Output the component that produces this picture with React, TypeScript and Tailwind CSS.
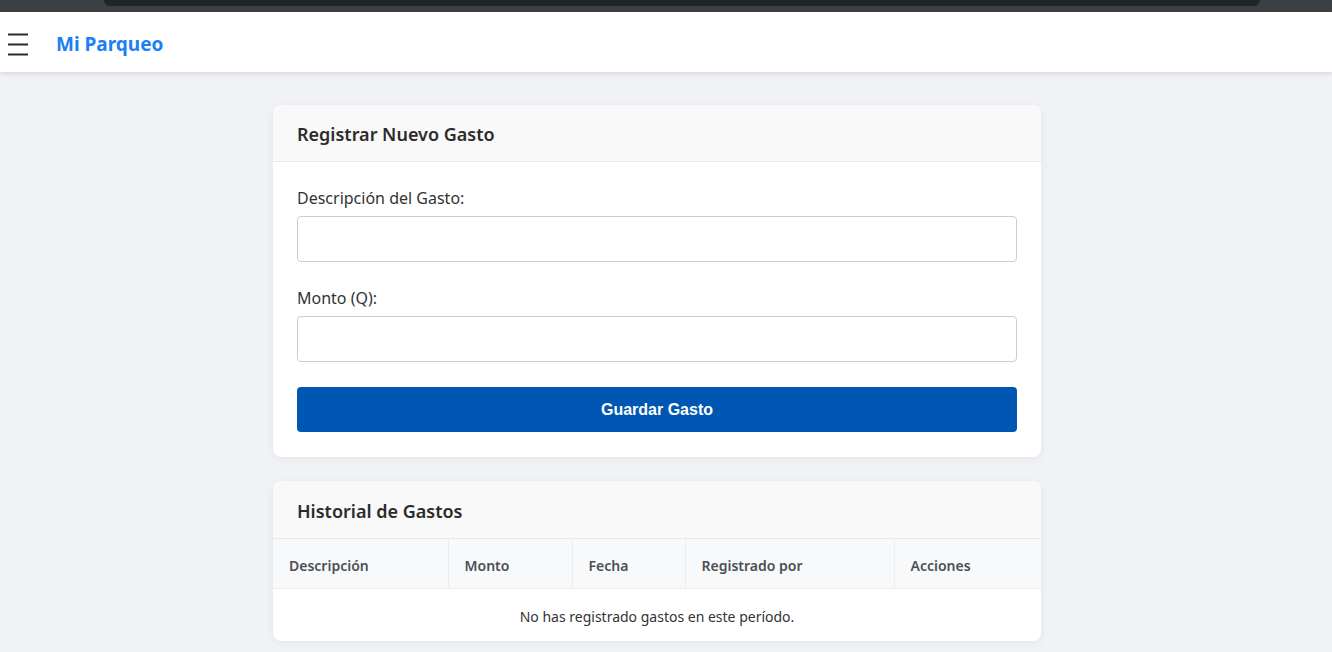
const columns = [
  { label: "Descripción", w: "w-[175px]" },
  { label: "Monto", w: "w-[124px]" },
  { label: "Fecha", w: "w-[113px]" },
  { label: "Registrado por", w: "w-[209px]" },
  { label: "Acciones", w: "" },
]

function Field({ label }: { label: string }) {
  return (
    <div className="flex flex-col">
      <label className="text-[16px] leading-6 text-[#333] mb-[6px]">{label}</label>
      <input className="h-[46px] w-full rounded-[4px] border border-[#ccc] bg-white px-3 outline-none" />
    </div>
  )
}

export default function App() {
  return (
    <div className="min-h-[652px] bg-[#f0f2f5] font-['Noto_Sans',sans-serif] text-[#333]">
      <div className="h-[12px] bg-[#3a4043] px-[104px]">
        <div className="h-[6px] rounded-b-[10px] bg-[#1f2628] w-[1156px]" />
      </div>
      <nav className="flex h-[60px] items-center bg-white shadow-[0_2px_4px_rgba(0,0,0,0.1)]">
        <svg className="ml-[7px] mt-[3px]" width="22" height="24" viewBox="0 0 22 24" fill="none">
          <path d="M1 2.5h20M1 12.5h20M1 22.5h20" stroke="#2a2a2a" strokeWidth="2" />
        </svg>
        <span className="ml-[27px] pt-[5px] text-[19px] font-bold text-[#1a80f5]">Mi Parqueo</span>
      </nav>

      <main className="ml-[273px] flex w-[768px] flex-col gap-6 pt-[33px] pb-4">
        <section className="overflow-hidden rounded-[8px] bg-white shadow-[0_2px_8px_rgba(0,0,0,0.06)]">
          <header className="flex h-[57px] items-center border-b border-[#e9e9e9] bg-[#f9f9f9] px-6 pt-[2px]">
            <h2 className="text-[18px] font-semibold text-[#2b2b2b]">Registrar Nuevo Gasto</h2>
          </header>
          <div className="flex flex-col gap-6 px-6 pt-6 pb-[25px]">
            <Field label="Descripción del Gasto:" />
            <Field label="Monto (Q):" />
            <button className="mt-px h-[45px] w-full rounded-[4px] bg-[#0056b3] font-['Liberation_Sans',sans-serif] text-[16px] font-bold text-white">
              Guardar Gasto
            </button>
          </div>
        </section>

        <section className="overflow-hidden rounded-[8px] bg-white shadow-[0_2px_8px_rgba(0,0,0,0.06)]">
          <header className="flex h-[58px] items-center border-b border-[#e9e9e9] bg-[#f9f9f9] px-6 pt-[3px]">
            <h2 className="text-[18px] font-semibold text-[#2b2b2b]">Historial de Gastos</h2>
          </header>
          <table className="w-full border-collapse">
            <thead>
              <tr className="h-[49px] bg-[#f8f9fa] border-b border-[#eceef0]">
                {columns.map((c, i) => (
                  <th
                    key={c.label}
                    className={`${c.w} px-4 pt-1 text-left text-[14px] font-semibold text-[#495057] ${i < columns.length - 1 ? "border-r border-[#eceef0]" : ""}`}
                  >
                    {c.label}
                  </th>
                ))}
              </tr>
            </thead>
            <tbody>
              <tr className="h-[53px]">
                <td colSpan={5} className="pt-1 text-center text-[14px] text-[#333]">
                  No has registrado gastos en este período.
                </td>
              </tr>
            </tbody>
          </table>
        </section>
      </main>
    </div>
  )
}
